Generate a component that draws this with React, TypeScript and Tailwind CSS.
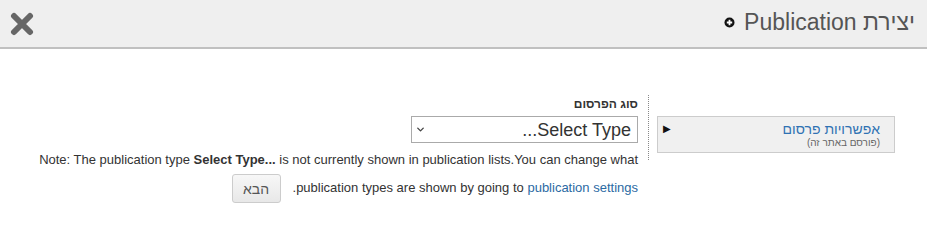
import { ChevronDown } from "lucide-react";

function CloseIcon() {
  return (
    <svg width="24" height="24" viewBox="0 0 24 24" className="block">
      <path d="M4 4 L20 20 M20 4 L4 20" stroke="#666666" strokeWidth="6" strokeLinecap="round" />
    </svg>
  );
}

function PlusCircle() {
  return (
    <svg width="11" height="11" viewBox="0 0 11 11" className="block">
      <circle cx="5.5" cy="5.5" r="5" fill="#111111" />
      <path d="M5.5 2.8 V8.2 M2.8 5.5 H8.2" stroke="#ffffff" strokeWidth="1.8" />
    </svg>
  );
}

export default function App() {
  return (
    <div
      dir="rtl"
      className="w-[927px] h-[250px] bg-white overflow-hidden"
      style={{ fontFamily: '"Liberation Sans", Arial, sans-serif' }}
    >
      {/* Header */}
      <div className="h-[49px] bg-[#efefef] border-b-2 border-[#c0c0c0] flex items-center justify-between pr-[12px] pl-[10px]">
        <div className="flex items-center gap-[9px] text-[23px] text-[#555555] leading-none pb-[2px]">
          <span>יצירת Publication</span>
          <PlusCircle />
        </div>
        <button className="pt-[1px]">
          <CloseIcon />
        </button>
      </div>

      <div className="flex items-start pt-[46px]">
        {/* Sidebar */}
        <div className="w-[279px] shrink-0 pr-[32px] pl-[9px] pt-[21px] pb-[7px] border-l border-dotted border-[#888888]">
          <div className="w-[238px] h-[37px] bg-[#f0f0f0] border border-[#cccccc] flex items-start justify-between pr-[14px] pl-[5px] pt-[4px]">
            <div className="flex flex-col items-start">
              <span className="text-[14px] leading-[16px] text-[#2f72b3]">אפשרויות פרסום</span>
              <span className="text-[10px] leading-[12px] text-[#666666]">(פורסם באתר זה)</span>
            </div>
            <span className="text-[10px] leading-none text-[#111111] mt-[3px]">▶</span>
          </div>
        </div>

        {/* Main */}
        <div className="flex-1 pr-[10px] pl-[22px]">
          <div className="text-[12px] font-bold text-[#333333] leading-[16px] pt-[1px]">סוג הפרסום</div>
          <div className="mt-[4px] w-[227px] h-[27px] border border-[#aaaaaa] bg-white flex items-center justify-between pr-[6px] pl-[3px]">
            <span className="text-[18px] text-[#333333] leading-none">Select Type...</span>
            <ChevronDown size={11} strokeWidth={3} color="#444444" />
          </div>
          <p className="mt-[3px] text-[13px] text-[#333333] leading-[28px]">
            Note: The publication type <b>Select Type...</b> is not currently shown in publication lists.You can change what publication types are shown by going to{" "}
            <span className="text-[#2b6aa3]">publication settings</span>.
            <button className="mr-[12px] w-[49px] h-[29px] align-middle bg-gradient-to-b from-[#f7f7f7] to-[#e8e8e8] border border-[#cccccc] rounded-[3px] text-[14px] text-[#555555] leading-none">
              הבא
            </button>
          </p>
        </div>
      </div>
    </div>
  );
}
